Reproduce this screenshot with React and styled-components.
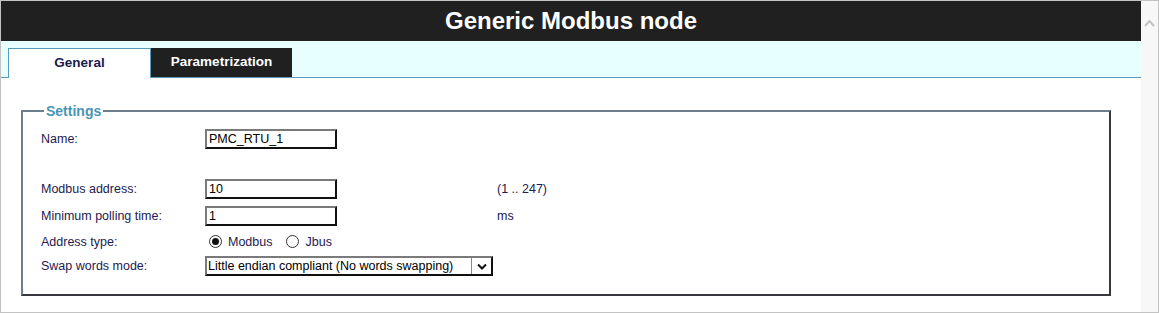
import React from 'react';
import styled, { createGlobalStyle } from 'styled-components';

const GlobalStyle = createGlobalStyle`
  html, body {
    margin: 0;
    padding: 0;
    background: #fff;
  }
  body {
    font-family: 'Liberation Sans', Arial, sans-serif;
  }
`;

// Styles
const Frame = styled.div`
  width: 1159px;
  height: 313px;
  box-sizing: border-box;
  border: 1px solid #c3c3c3;
  display: flex;
  overflow: hidden;
`;

const Main = styled.div`
  flex: 1;
  display: flex;
  flex-direction: column;
  min-width: 0;
`;

const Header = styled.div`
  height: 40px;
  background: #202020;
  color: #fff;
  display: flex;
  align-items: center;
  justify-content: center;
  font-size: 24px;
  font-weight: bold;
`;

const TabStrip = styled.div`
  height: 36px;
  background: #e8ffff;
  border-bottom: 1px solid #5a9bb9;
  display: flex;
  align-items: flex-end;
  padding-left: 7px;
`;

const Tab = styled.div`
  box-sizing: border-box;
  width: ${(props) => props.width};
  height: ${(props) => (props.active ? '30px' : '29px')};
  margin-bottom: ${(props) => (props.active ? '-1px' : '0')};
  background: ${(props) => (props.active ? '#fff' : '#202020')};
  color: ${(props) => (props.active ? '#1c1c50' : '#fff')};
  border: ${(props) => (props.active ? '1px solid #5a9bb9' : 'none')};
  border-bottom: none;
  display: flex;
  align-items: center;
  justify-content: center;
  padding-bottom: ${(props) => (props.active ? '2px' : '3px')};
  font-size: 13.5px;
  font-weight: bold;
`;

const Content = styled.div`
  flex: 1;
  padding-top: 25px;
`;

const Fieldset = styled.fieldset`
  margin: 0 30px 0 20px;
  padding: 6px 0 16px 18px;
  border-width: 2px;
  border-style: solid;
  border-color: #6f7e8c #38383e #38383e #6f7e8c;
`;

const Legend = styled.legend`
  margin-left: 3px;
  padding: 0 2px;
  font-size: 14px;
  font-weight: bold;
  color: #4a94b4;
`;

const Row = styled.div`
  display: grid;
  grid-template-columns: 164px 292px auto;
  align-items: center;
  height: ${(props) => props.height}px;
  font-size: 12.5px;
  color: #1e2050;
`;

const Label = styled.span``;

const Unit = styled.span``;

const TextInput = styled.input`
  box-sizing: border-box;
  width: 132px;
  height: 20px;
  margin: 0;
  padding: 0 2px;
  border-width: 2px;
  border-style: solid;
  border-color: #7a7a7a #111 #111 #7a7a7a;
  font-family: 'Liberation Sans', Arial, sans-serif;
  font-size: 12.5px;
  color: #000;
  outline: none;
`;

const RadioGroup = styled.div`
  display: flex;
  align-items: center;
  padding-left: 4px;
`;

const RadioLabel = styled.label`
  display: flex;
  align-items: center;
  margin-right: 14px;
  color: #1e2050;
`;

const RadioCircle = styled.span`
  box-sizing: border-box;
  width: 13px;
  height: 13px;
  border-radius: 50%;
  border: 1px solid #333;
  background: #fff;
  margin-right: 6px;
  display: flex;
  align-items: center;
  justify-content: center;
  &::after {
    content: '';
    width: 7px;
    height: 7px;
    border-radius: 50%;
    background: ${(props) => (props.checked ? '#111' : 'transparent')};
  }
`;

const SelectBox = styled.div`
  box-sizing: border-box;
  width: 288px;
  height: 20px;
  border-width: 2px;
  border-style: solid;
  border-color: #7a7a7a #111 #111 #7a7a7a;
  display: flex;
  align-items: center;
  background: #fff;
`;

const SelectText = styled.span`
  flex: 1;
  padding-left: 1px;
  color: #000;
  font-size: 12.5px;
  white-space: nowrap;
`;

const DropButton = styled.span`
  box-sizing: border-box;
  width: 20px;
  height: 16px;
  border-left: 1px solid #888;
  display: flex;
  align-items: center;
  justify-content: center;
  background: #fff;
`;

const Scrollbar = styled.div`
  width: 17px;
  background: #f7f7f7;
  display: flex;
  justify-content: center;
  padding-top: 18px;
  box-sizing: border-box;
`;

const Chevron = () => (
  <svg width="11" height="8" viewBox="0 0 11 8">
    <path d="M1 7 L5.5 2 L10 7" fill="none" stroke="#c2c2c2" strokeWidth="2" />
  </svg>
);

const DownArrow = () => (
  <svg width="10" height="7" viewBox="0 0 10 7">
    <path d="M1 1.5 L5 5.5 L9 1.5" fill="none" stroke="#111" strokeWidth="2" />
  </svg>
);

const App = () => {
  return (
    <>
      <GlobalStyle />
      <Frame>
        <Main>
          <Header>Generic Modbus node</Header>
          <TabStrip>
            <Tab active width="143px">General</Tab>
            <Tab width="141px">Parametrization</Tab>
          </TabStrip>
          <Content>
            <Fieldset>
              <Legend>Settings</Legend>
              <Row height={27}>
                <Label>Name:</Label>
                <TextInput defaultValue="PMC_RTU_1" />
              </Row>
              <Row height={23} />
              <Row height={27}>
                <Label>Modbus address:</Label>
                <TextInput defaultValue="10" />
                <Unit>(1 .. 247)</Unit>
              </Row>
              <Row height={27}>
                <Label>Minimum polling time:</Label>
                <TextInput defaultValue="1" />
                <Unit>ms</Unit>
              </Row>
              <Row height={25}>
                <Label>Address type:</Label>
                <RadioGroup>
                  <RadioLabel>
                    <RadioCircle checked />
                    Modbus
                  </RadioLabel>
                  <RadioLabel>
                    <RadioCircle />
                    Jbus
                  </RadioLabel>
                </RadioGroup>
              </Row>
              <Row height={24}>
                <Label>Swap words mode:</Label>
                <SelectBox>
                  <SelectText>Little endian compliant (No words swapping)</SelectText>
                  <DropButton>
                    <DownArrow />
                  </DropButton>
                </SelectBox>
              </Row>
            </Fieldset>
          </Content>
        </Main>
        <Scrollbar>
          <Chevron />
        </Scrollbar>
      </Frame>
    </>
  );
};

export default App;
